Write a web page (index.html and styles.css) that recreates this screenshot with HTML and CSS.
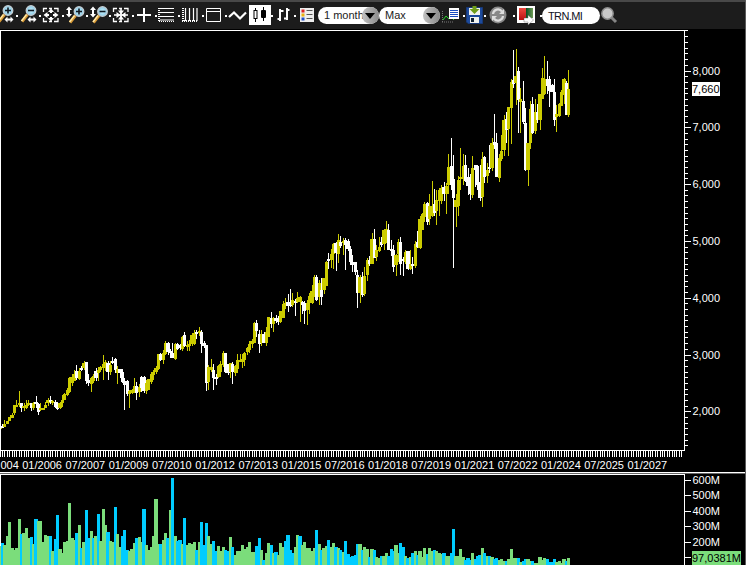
FILE: index.html
```
<!DOCTYPE html>
<html lang="en">
	<head>
		<title>TRN.MI - 1 month</title>
		<meta charset="utf-8">
		<link rel="stylesheet" href="styles.css">
	</head>

	<body>
	<svg class="defs">
		<defs>
			<radialGradient id="glass"><stop offset="0" stop-color="#c9f2ff"/><stop offset="1" stop-color="#8ccbe6"/></radialGradient>
			<linearGradient id="green" x2="1"><stop offset="0" stop-color="#064d22"/><stop offset="1" stop-color="#6f9b55"/></linearGradient>
			<linearGradient id="red" y2="1" x2="0"><stop offset="0" stop-color="#f04a40"/><stop offset="1" stop-color="#b80f12"/></linearGradient>
			<g id="lens">
				<path d="M9.5 14.5L4 21.5" stroke="#d99a35" stroke-width="3"/>
				<path d="M8.5 14.5L3.5 21" stroke="#ffe9a8" stroke-width="1.4"/>
				<circle cx="13" cy="10.5" r="4.8" fill="url(#glass)" stroke="#c5cdd2" stroke-width="1.3"/>
				<path d="M10 10.5h6" stroke="#101820" stroke-width="1.6"/>
			</g>
			<path id="plus" d="M13 7.5v6" stroke="#101820" stroke-width="1.6"/>
			<path id="harrow" d="M9.5 19.5l3-3v2h3v-2l3 3l-3 3v-2h-3v2z" fill="#fff"/>
			<path id="varrow" d="M5 6.5l3 3.5h-2v4h2l-3 3.5l-3-3.5h2v-4h-2z" fill="#fff"/>
			<path id="frame" d="M2.5 12V8.5H6M8 8.5h3M13 8.5h4V12M17 18v3.500h-4M11 21.500H8M6 21.500H2.500V18" fill="none" stroke="#fff" stroke-width="1.300"/>
		</defs>
	</svg>

	<div id="toolbar">
		<svg class="tool first"><g transform="translate(-5 0)"><use href="#lens"/><use href="#plus"/><use href="#harrow"/></g></svg><i class="dot"></i>
		<svg class="tool"><use href="#lens"/><use href="#harrow"/></svg><i class="dot"></i>
		<svg class="tool"><use href="#frame"/><path d="M10 8.500l3 3.500h-6zM10 21.500l3-3.500h-6zM2.500 15l4-3v6zM17.500 15l-4-3v6z" fill="#fff"/><path d="M5 15h3M12 15h3M10 11v2M10 17v2" stroke="#fff" stroke-width="2"/></svg><i class="dot"></i>
		<svg class="tool wide"><use href="#varrow"/><g transform="translate(2 1)"><use href="#lens"/><use href="#plus"/></g></svg><i class="dot"></i>
		<svg class="tool"><use href="#varrow"/><use href="#lens" x="1.500" y="1"/></svg><i class="dot"></i>
		<svg class="tool"><use href="#frame"/><path d="M10 14.500l3-4h-6zM10 15.500l3 4h-6zM9.500 15l-4-3v6zM10.500 15l4-3v6z" fill="#fff"/><path d="M3 15h14M10 9v12" stroke="#fff" stroke-width="1.500"/></svg><i class="dot"></i>
		<svg class="tool"><path d="M3 15h5M12 15h5M10 8v5M10 17v5M8 15h4M10 13v4" stroke="#fff" stroke-width="2"/></svg><i class="dot"></i>
		<svg class="tool"><path d="M3 8.500h14M3 12.500h14M3 16.500h14M3 20h14" stroke="#fff" stroke-width="1.200"/><path d="M2 8v14" stroke="#fff" stroke-width="2" stroke-dasharray="1 1"/><path d="M2 21.500h16" stroke="#fff" stroke-dasharray="1 1"/></svg><i class="dot"></i>
		<svg class="tool wide"><path d="M5.500 8v13M9.500 8v13M13.500 8v13M17 8v13" stroke="#fff" stroke-width="1.200"/><path d="M3 8v13" stroke="#fff" stroke-width="2" stroke-dasharray="1 1"/><path d="M2 21h16" stroke="#fff" stroke-width="2" stroke-dasharray="1 1"/></svg><i class="dot"></i>
		<svg class="tool"><path d="M2.500 8.500h14v13h-14zM2 11.500h15" fill="none" stroke="#fff"/></svg><i class="dot"></i>
		<svg class="tool"><path d="M2 17l5-4.500l6 6l6-6" fill="none" stroke="#fff" stroke-width="2.200"/></svg>
		<svg class="tool active"><path d="M6.500 8v14M14.500 7v14" stroke="#000"/><rect x="5" y="10.500" width="3" height="8" fill="#fff" stroke="#000"/><rect x="12" y="10" width="5" height="8" rx="1"/></svg><i class="dot"></i>
		<svg class="tool"><path d="M7 9v12M14 8v12" stroke="#fff" stroke-width="2"/><path d="M4.500 19h2M7 11h3.500M11 18.500h3M14 10h2.500" stroke="#fff" stroke-width="2"/></svg><i class="dot"></i>
		<svg class="list"><path d="M1 8h14v14H1z" fill="#eee"/><path d="M2.500 9.500h3v3h-3z" fill="#d22"/><path d="M2.500 13.500h3v3h-3z" fill="#eab010"/><path d="M2.500 17.500h3v3h-3z" fill="#2350c8"/><path d="M7.500 10.500h6M7.500 14.500h6M7.500 18.500h6" stroke="#555"/></svg>
		<div class="select">1 month<span></span></div>
		<div class="select">Max<span></span></div>
		<svg class="mini"><path d="M1.500 11v11M1 22h12" stroke="#777" stroke-dasharray="1 1"/><path d="M2 20l3-4l3 3l2-2l3 3" fill="none" stroke="#2ad52a"/><path d="M8 8h10v11H8z" fill="#fff"/><path d="M9 10.500h8M9 12.500h8M9 14.500h8M9 16.500h8" stroke="#1c4fc0"/></svg><i class="dot"></i>
		<svg class="save"><path d="M.5 7.500h16v16H2l-1.500-1.500z" fill="#1d4a9a" stroke="#173877"/><path d="M3 8h11v7H3zM4 17h9v6H4z" fill="#f1f3ee"/><path d="M5 18h3v4H5z" fill="#123"/><path d="M6.500 6h4v3h3l-5 5l-5-5h3z" fill="#6f9d18"/></svg><i class="dot"></i>
		<svg class="refresh"><circle cx="9" cy="15" r="8.500" fill="#888"/><path d="M4 14a5 5 0 0 1 9-2.500M14 16a5 5 0 0 1-9 2.500" fill="none" stroke="#ddd" stroke-width="2.200"/><path d="M15 9v5h-5zM3 21v-5h5z" fill="#ddd"/></svg><i class="dot"></i>
		<svg class="export"><path d="M0 6h18v17H0z" fill="#fff"/><path d="M2 8h7v12H2z" fill="url(#red)"/><path d="M9 8h7v10H9z" fill="url(#green)"/><path d="M7 18h4v-3l5.500 5l-5.500 5v-3H7z" fill="#fff" stroke="#555" stroke-width=".4"/></svg><i class="dot"></i>
		<div class="symbol">TRN.MI</div>
		<svg class="search"><path d="M11 17l5 5" stroke="#858585" stroke-width="3"/><circle cx="7.500" cy="13.500" r="5.700" fill="#c9c9c9" stroke="#8c8c8c" stroke-width="1.500"/></svg>
	</div>

	<svg id="price" class="pane" width="745" height="443" shape-rendering="crispEdges"></svg>
	<svg id="volume" class="pane" width="745" height="92" shape-rendering="crispEdges"></svg>

		<script src="chart.js"></script>
	</body>
</html>
```
FILE: styles.css
```
body {
	margin: 0;
	height: 565px;
	background-color: #000;
	color: #fff;
	font-family: "Liberation Sans", Arial, sans-serif;
	font-size: 11px;
	overflow: hidden;
	box-sizing: border-box;
	border-right: 1px solid #5a5a5a;
}
.defs {
	position: absolute;
	width: 0;
	height: 0;
}
#toolbar {
	display: flex;
	height: 29px;
	margin-bottom: 1px;
	background: linear-gradient(#484848 2px, #1c1c1c 2px);
}
#toolbar svg {
	flex: none;
	height: 29px;
}
#toolbar .tool {
	width: 21px;
}
#toolbar .wide {
	width: 22px;
}
#toolbar .first {
	width: 16px;
}
#toolbar .active {
	width: 22px;
	height: 20px;
	margin: 5px 0 0 1px;
	background: #fff;
}
.active > * {
	transform: translateY(-5px);
}
.dot {
	flex: none;
	width: 2px;
	height: 2px;
	margin-top: 15px;
	background: #fff;
}
#toolbar .list {
	width: 16px;
	margin: 0 3px 0 3px;
}
.select {
	flex: none;
	display: flex;
	box-sizing: border-box;
	width: 61px;
	height: 17px;
	margin-top: 7px;
	padding-left: 6px;
	border-radius: 9px;
	background: #fff;
	color: #222;
	line-height: 17px;
	justify-content: space-between;
}
.select span {
	flex: none;
	width: 17px;
	height: 17px;
	margin-left: -5px;
	border-radius: 50%;
	background: linear-gradient(90deg, #c2c2c2, #8b8b8b);
}
.select span:before {
	content: "";
	display: block;
	width: 0;
	margin: 6px 0 0 3px;
	border: 5px solid transparent;
	border-top: 6px solid #000;
	border-bottom: 0;
}
#toolbar .mini {
	width: 19px;
	margin: 0 3px 0 1px;
}
#toolbar .save {
	width: 18px;
	margin-left: 1px;
}
#toolbar .refresh {
	width: 18px;
	margin: 0 6px 0 3px;
}
#toolbar .export {
	width: 18px;
	margin: 0 5px 0 2px;
}
.symbol {
	flex: none;
	box-sizing: border-box;
	width: 58px;
	height: 17px;
	margin-top: 7px;
	padding-left: 6px;
	border-radius: 9px;
	background: #fff;
	color: #112;
	line-height: 18px;
	letter-spacing: -.6px;
}
#toolbar .search {
	width: 18px;
}
.pane {
	display: block;
}
.pane text {
	fill: #fff;
}
.pane .mark text {
	fill: #000;
}
```
FILE: chart.js
```
var NS = 'http://www.w3.org/2000/svg';
var STEP = 2.4;
var AXIS = 684;

// one month each: direction (y = up, w = down), high, body top, body bottom, low
var candles = `
y424,426,429,430 w424,426,427,428 y420,424,427,427 y421,421,424,424 y417,417,421,421 y413,415,418,418 y405,405,413,415 y400,405,407,407
y391,403,405,407 w403,403,408,412 y403,406,408,411 y400,405,408,409 y400,403,404,406 w403,403,408,411 y402,403,408,410 w396,402,404,408
w403,404,412,415 y403,408,410,411 y408,408,409,409 y402,405,408,408 y398,400,403,406 w396,400,402,404 y400,401,402,405 w400,402,407,408
w402,407,408,410 y402,403,408,409 y395,400,403,407 y393,394,400,400 y388,390,395,396 y377,378,392,393 y374,377,383,386 y370,374,381,381
w365,371,378,380 y368,371,379,380 w366,368,370,371 y361,363,368,370 w362,362,381,384 w374,380,383,386 y377,378,384,392 y374,376,381,383
w368,371,378,381 y367,370,373,381 y366,367,370,372 y355,364,368,380 y360,362,367,371 w361,363,372,380 y361,365,372,375 w357,361,363,364
w358,359,370,373 y366,369,373,384 w369,369,373,378 w369,372,382,383 w378,381,385,410 w380,381,394,396 y390,391,394,408 y389,390,393,394
y378,386,391,393 w382,386,393,400 y384,387,392,397 w376,377,388,392 w376,377,391,393 y380,383,391,394 y379,379,390,390 y372,374,382,384
y370,372,375,380 y366,368,372,374 y354,354,369,370 w353,354,360,361 y350,353,360,364 y341,343,354,355 w342,343,352,355 w349,351,353,358
w343,353,358,358 y343,344,359,360 w343,344,349,350 w344,345,348,350 y336,337,349,351 w332,335,346,347 y341,345,347,351 y340,344,346,351
y333,335,344,346 y330,333,344,345 w330,332,334,339 y327,331,333,336 w330,332,344,353 w341,343,346,348 w345,345,383,391 y365,367,382,390
y359,367,370,372 w364,370,378,390 w374,377,378,385 y365,366,377,378 y361,364,372,377 y351,353,365,367 w353,353,372,373 w364,364,373,375
y363,363,372,378 w362,364,372,384 y365,366,373,376 y354,360,369,373 y354,360,362,362 y354,359,362,368 y352,353,360,366 y347,348,352,355
y341,344,350,353 y339,341,344,348 y322,323,343,343 w320,323,331,337 w330,334,344,353 y330,334,343,346 w332,334,343,343 y327,332,343,346
y317,317,337,337 w312,318,324,328 y317,318,324,332 w315,318,321,323 w316,320,321,325 y311,311,322,323 y301,304,318,318 y298,303,304,309
w294,302,306,312 w289,303,306,307 y293,300,305,307 w299,301,303,316 y292,298,302,303 y296,297,302,322 w301,302,305,314 w301,303,311,324
y300,303,310,325 y293,296,303,314 y285,291,303,304 y275,277,293,297 w275,277,300,301 y280,283,297,305 w278,290,297,305 y278,278,290,294
y261,262,286,286 w253,259,261,269 y249,254,260,268 y243,244,254,269 w242,243,253,271 y234,240,254,263 w236,242,246,248 y238,241,243,255
w238,240,245,270 w239,241,249,251 w246,249,262,265 w255,262,265,272 w262,262,272,275 w270,275,293,308 y275,277,293,303 w272,277,295,297
y267,276,294,296 y258,260,275,281 w256,260,264,266 y233,239,264,264 w229,239,258,258 y245,250,257,261 y237,247,251,252 w237,242,245,247
y229,230,244,250 y221,229,238,243 w224,230,250,250 w240,249,251,256 w245,250,267,272 y254,255,265,276 y239,242,254,262 w237,242,264,275
w257,259,261,276 y250,252,262,264 w251,251,269,270 y250,264,269,270 w257,264,266,274 y241,244,266,268 w231,242,247,248 y216,219,248,249
y213,214,230,230 y202,204,217,222 w202,203,222,225 y194,206,219,225 y181,206,216,217 w189,204,213,216 y190,200,211,225 y188,190,201,216
y185,188,201,204 w182,187,194,201 y183,186,194,214 y154,167,185,194 w138,166,185,190 w155,179,198,268 y194,200,207,227 y176,180,206,216
y148,177,179,190 y154,166,179,185 w155,165,181,182 w168,177,186,195 w174,186,194,200 y156,168,195,198 w165,165,170,187 w165,166,185,190
w165,182,198,201 y152,159,197,207 w156,157,177,183 y163,170,176,183 w145,167,169,173 y138,143,168,171 w114,142,145,149 w133,143,177,177
y154,158,178,182 y135,151,159,161 y115,120,150,156 w112,119,130,143 y107,107,129,156 y79,82,108,144 w50,80,84,88 y49,76,83,105
w67,71,100,133 y88,99,102,133 w81,101,122,124 w108,123,170,171 y143,143,170,186 y101,109,143,149 w97,104,133,134 y99,112,131,134
w104,112,120,123 y94,94,120,130 y68,78,99,99 y56,79,94,95 w61,79,86,94 w76,79,91,107 w84,85,92,92 w79,92,120,126
y105,114,117,132 y103,104,116,117 y90,92,106,106 y78,79,95,104 w81,83,115,115 y70,89,115,117
`.trim().split(/\s+/);

// g = green, b = blue, then the top of the bar
var volumes = `
g546 b543 g545 g536 g522 g548 g550 g548 g519 b534 g533 g528 g538 b537 g544 b519 g521 g521 g542 g535
g536 b536 g551 b539 b515 g549 g553 g542 g541 g503 g538 g540 b533 g525 b548 g542 b510 b538 g531 b538
g536 b514 g541 g509 g525 b532 g541 g542 b507 g534 g547 b536 b530 b550 g551 g549 g543 b538 g537 g542
b509 g545 g550 g547 g536 g499 g544 b544 g540 g533 b538 g510 b478 g536 b541 b540 g544 b518 g545 g543
g544 g542 b550 g542 b522 b545 b523 g536 g544 b541 b551 g546 g551 g547 b550 b551 g537 b547 g555 g551
g551 g545 g549 g547 g542 g552 g552 b546 b538 g550 b560 g553 g543 b545 g553 b552 g555 g543 g547 b541
b535 b550 b553 g547 g535 b536 g545 g542 g548 g548 g551 g548 b530 g544 b550 g548 g546 b540 g547 g543
b547 g548 b550 g552 b541 b554 b557 b556 b555 b544 g544 b550 g547 g549 b557 g549 b550 g557 g558 b556
g556 g553 b556 b549 b551 g545 g553 b543 b547 g556 b558 g557 b553 g551 b555 g551 g557 g548 b554 g548
g551 b550 g551 g553 g554 b553 g556 g556 b553 b529 g556 g556 g549 g557 b560 b558 b560 g553 b559 b556
b555 g548 b553 g556 b556 g557 b559 b558 g560 g559 g561 b561 g559 g549 g558 g558 b558 g562 b561 b559
g559 g561 b561 g563 g563 g557 g560 g558 b559 b562 b562 b559 g562 g561 g563 g559 b561 g558
`.trim().split(/\s+/);

function pane( id, top ) {

	var svg = document.getElementById( id );
	svg.setAttribute( 'viewBox', '0 ' + top + ' 745 ' + svg.getAttribute( 'height' ) );
	return svg;

}

function rect( parent, x, y, w, h, fill ) {

	var el = document.createElementNS( NS, 'rect' );
	el.setAttribute( 'x', x );
	el.setAttribute( 'y', y );
	el.setAttribute( 'width', w );
	el.setAttribute( 'height', h );
	el.setAttribute( 'fill', fill || '#fff' );
	parent.appendChild( el );

}

function text( parent, x, y, str ) {

	var el = document.createElementNS( NS, 'text' );
	el.setAttribute( 'x', x );
	el.setAttribute( 'y', y );
	el.textContent = str;
	parent.appendChild( el );

}

function mark( parent, y, w, h, fill, str ) {

	var g = document.createElementNS( NS, 'g' );
	g.setAttribute( 'class', 'mark' );
	parent.appendChild( g );
	rect( g, 692, y, w, h, fill );
	text( g, 692, y + 11, str );

}

function bodyX( i ) {

	// every fifth month falls on a whole pixel and gets one more column
	var x = Math.floor( i * STEP + 0.001 );
	return i % 5 ? { x: x, left: x - 1, w: 3 } : { x: x, left: x - 2, w: 4 };

}

function drawPrice() {

	var svg = pane( 'price', 30 );

	candles.forEach( function ( c, i ) {

		var v = c.slice( 1 ).split( ',' ).map( Number );
		var fill = c[ 0 ] == 'y' ? '#cccc00' : '#ffffff';
		var b = bodyX( i );
		rect( svg, b.x, v[ 0 ], 1, v[ 3 ] - v[ 0 ], fill );
		rect( svg, b.left, v[ 1 ], b.w, Math.max( 2, v[ 2 ] - v[ 1 ] ), fill );

	} );

	rect( svg, 0, 30, AXIS + 4, 1 );
	rect( svg, 0, 30, 1, 421 );
	rect( svg, AXIS, 30, 1, 421 );
	rect( svg, 0, 450, AXIS + 1, 1 );

	for ( var i = 0; i < 285; i ++ ) {

		rect( svg, Math.floor( i * STEP + 0.001 ), 451, 1, 6 );

	}

	for ( var p = 1400; p <= 8600; p += 100 ) {

		var y = Math.round( 411.3 - ( p - 2000 ) * 0.0568 );
		rect( svg, AXIS + 1, y, p % 1000 ? 3 : 6, 1 );
		if ( p % 1000 == 0 ) text( svg, 692.5, y + 4, p / 1000 + ',000' );

	}

	// the first date is cut by the left edge
	text( svg, 0.5, 469, '004' );

	for ( var n = 1; n < 16; n ++ ) {

		var year = 2004 + Math.floor( ( n * 18 + 6 ) / 12 );
		text( svg, - 21 + n * 43.23, 469, ( n % 2 ? '01/' : '07/' ) + year );

	}

	mark( svg, 82, 28, 14, '#fff', '7,660' );
	rect( svg, 0, 472, 745, 1 );

}

function drawVolume() {

	var svg = pane( 'volume', 473 );

	rect( svg, 0, 473, 745, 1, '#666' );
	rect( svg, 0, 474, AXIS + 1, 1 );
	rect( svg, 0, 474, 1, 91 );
	rect( svg, AXIS, 474, 1, 91 );

	volumes.forEach( function ( s, i ) {

		var top = Number( s.slice( 1 ) );
		var b = bodyX( i );
		rect( svg, b.left, top, b.w, 565 - top, s[ 0 ] == 'g' ? '#7bdd7b' : '#00ccff' );

	} );

	for ( var m = 6; m > 0; m -- ) {

		var y = Math.round( 480 + ( 6 - m ) * 15.4 );
		rect( svg, AXIS + 1, y, 6, 1 );
		if ( m > 1 ) text( svg, 692.5, y + 4, m + '00M' );

	}

	mark( svg, 551, 49, 14, '#7bdd7b', '97,0381M' );

}

drawPrice();
drawVolume();
```
